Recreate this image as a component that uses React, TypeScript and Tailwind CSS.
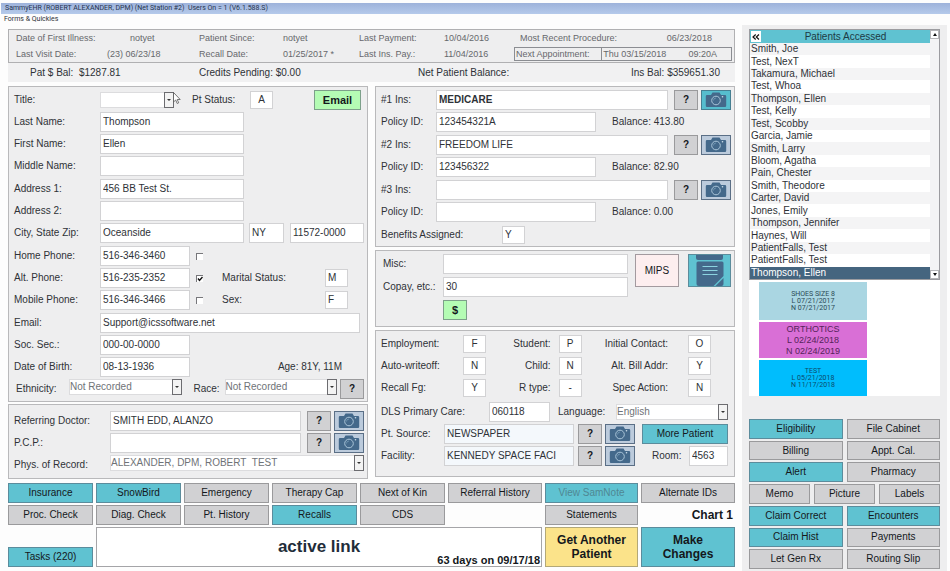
import { useId } from 'react';
import type { ReactNode } from 'react';
import clsx from 'clsx';

const patients = [
  'Smith, Joe',
  'Test, NexT',
  'Takamura, Michael',
  'Test, Whoa',
  'Thompson, Ellen',
  'Test, Kelly',
  'Test, Scobby',
  'Garcia, Jamie',
  'Smith, Larry',
  'Bloom, Agatha',
  'Pain, Chester',
  'Smith, Theodore',
  'Carter, David',
  'Jones, Emily',
  'Thompson, Jennifer',
  'Haynes, Will',
  'PatientFalls, Test',
  'PatientFalls, Test',
  'Thompson, Ellen',
];

const tones = {
  gray: 'bg-[#d1d1d3] border-[#9a9a9c]',
  teal: 'bg-[#5fc2d1] border-[#5b8c9c]',
  green: 'bg-[#b4fcb4] border-[#7da08a]',
  yellow: 'bg-[#fbe38a] border-[#b3a877]',
  pink: 'bg-[#fdeeef] border-[#a39a9f]',
};

type BtnProps = { children: ReactNode; tone?: keyof typeof tones; className?: string; label?: string; disabled?: boolean };

function Btn({ children, tone = 'gray', className, label, disabled }: BtnProps) {
  return (
    <button
      type="button"
      aria-label={label}
      disabled={disabled}
      className={clsx(
        'flex items-center justify-center border text-center',
        disabled ? 'text-[#4f8793]' : 'text-[#14181c]',
        tones[tone],
        className
      )}
    >
      {children}
    </button>
  );
}

function Panel({ children, className }: { children: ReactNode; className?: string }) {
  return <section className={clsx('flex flex-col border border-[#b9b9bb] bg-[#eeeeef] pl-[5px] pr-[3px]', className)}>{children}</section>;
}

function Group({ children }: { children: ReactNode }) {
  return <div className="flex flex-col gap-0.5">{children}</div>;
}

function Row({ children }: { children: ReactNode }) {
  return <div className="flex h-5 items-center">{children}</div>;
}

// label + text box pair, both sized by the caller
type FieldProps = { label: string; value?: string; labelClass?: string; inputClass?: string };

function Field({ label, value = '', labelClass, inputClass }: FieldProps) {
  const id = useId();
  return (
    <>
      <label htmlFor={id} className={clsx('shrink-0 whitespace-nowrap', labelClass)}>
        {label}
      </label>
      <Box id={id} value={value} className={inputClass} />
    </>
  );
}

function Box({ id, value, className, name }: { id?: string; value?: string; className?: string; name?: string }) {
  return (
    <input
      id={id}
      type="text"
      aria-label={name}
      defaultValue={value}
      className={clsx('min-w-0 border border-[#d2d2d4] px-0.5 pb-0.5', className ?? 'h-5 w-36', !className?.includes('bg-') && 'bg-white')}
    />
  );
}

function Select({ label, value, labelClass, className }: { label: string; value: string; labelClass?: string; className?: string }) {
  const id = useId();
  return (
    <>
      <label htmlFor={id} className={clsx('shrink-0 whitespace-nowrap', labelClass)}>
        {label}
      </label>
      <div className={clsx('relative h-4', className)}>
        <select id={id} defaultValue={value} className="block h-4 w-full appearance-none border border-[#dcdcde] bg-white pr-3 leading-[14px] text-[#6f7377]">
          <option>{value}</option>
        </select>
        <span className="pointer-events-none absolute inset-y-0 right-0 flex w-2.5 items-center justify-center border border-[#6c6c70] bg-[#f3f3f3]">
          <svg viewBox="0 0 4 2" className="h-0.5 w-1 fill-[#333]">
            <path d="M0 0h4L2 2z" />
          </svg>
        </span>
      </div>
    </>
  );
}

function PhoneRow({ label, value, checked, children }: { label: string; value: string; checked?: boolean; children?: ReactNode }) {
  return (
    <Row>
      <Field label={label} value={value} labelClass="w-[86px]" inputClass="h-5 w-[90px]" />
      <span className="relative ml-1.5 mr-[19px] h-[7px] w-[7px] shrink-0">
        <input
          type="checkbox"
          aria-label={`${label} preferred`}
          defaultChecked={checked}
          className="peer block h-[7px] w-[7px] appearance-none border-l border-t border-[#77777b] bg-white"
        />
        <svg viewBox="0 0 7 7" className="pointer-events-none absolute inset-0 hidden h-[7px] w-[7px] peer-checked:block">
          <path d="M2 3.5 3.500 5.500 6.500 2" fill="none" stroke="#111" strokeWidth="1.4" />
        </svg>
      </span>
      {children}
    </Row>
  );
}

function Help({ label }: { label: string }) {
  return (
    <Btn label={`Look up ${label}`} className="h-5 w-6 shrink-0 font-bold">
      ?
    </Btn>
  );
}

function Camera({ label, active }: { label: string; active?: boolean }) {
  return (
    <button
      type="button"
      aria-label={`Scan ${label}`}
      className={clsx(
        'ml-[3px] flex h-5 w-[30px] shrink-0 items-center justify-center border',
        active ? 'border-[#467f92] bg-[#56bdce]' : 'border-[#5b6f86] bg-[#bccbdc]'
      )}
    >
      <svg viewBox="0 0 22 16" className="h-4 w-[22px]">
        <path d="M2 3h4l1.5-2.5h7L16 3h4a1.2 1.2 0 0 1 1.2 1.2v9.6A1.2 1.2 0 0 1 20 15H2a1.2 1.2 0 0 1-1.2-1.2V4.2A1.2 1.2 0 0 1 2 3z" fill="#44698b" />
        <circle cx="11" cy="8.5" r="4.3" fill="none" stroke="#a9c4d8" strokeWidth="1" />
        <path d="M8.5 8.5A2.5 2.5 0 0 1 11 6" fill="none" stroke="#7fa3bd" strokeWidth=".7" />
        <circle cx="17.5" cy="4.8" r=".8" fill="#cfe0ec" />
      </svg>
    </button>
  );
}

function Flag({ label, value, labelClass }: { label: string; value: string; labelClass?: string }) {
  return <Field label={label} value={value} labelClass={labelClass} inputClass="h-[18px] w-[23px] text-center" />;
}

function VisitSummary() {
  return (
    <>
      <div className="grid auto-rows-[16px] grid-cols-[91fr_92fr_84fr_76fr_85fr_70fr_218fr] items-center whitespace-nowrap border border-[#b0b0b2] bg-[#eeeeef] pl-[7px] pr-0.5 text-[9px] text-[#66686c]">
        <span>Date of First Illness:</span>
        <span className="pl-[23px]">notyet</span>
        <span>Patient Since:</span>
        <span>notyet</span>
        <span>Last Payment:</span>
        <span>10/04/2016</span>
        <div className="grid grid-cols-[151fr_67fr] pl-1.5">
          <span>Most Recent Procedure:</span>
          <span>06/23/2018</span>
        </div>
        <span>Last Visit Date:</span>
        <span>(23) 06/23/18</span>
        <span>Recall Date:</span>
        <span>01/25/2017 *</span>
        <span>Last Ins. Pay.:</span>
        <span>11/04/2016</span>
        <div className="grid h-3.5 grid-cols-[87fr_131fr] items-center border border-[#8b8d92] leading-3">
          <span className="pl-px">Next Appointment:</span>
          <span className="flex justify-between border-l border-[#8b8d92] pl-px pr-3.5">
            <span>Thu 03/15/2018</span>
            <span>09:20A</span>
          </span>
        </div>
      </div>
      <div className="grid h-[19px] grid-cols-[169fr_219fr_213fr_104fr] items-center whitespace-nowrap bg-[#f1f1f2] pl-[22px]">
        <span>Pat $ Bal:&nbsp; $1287.81</span>
        <span>Credits Pending: $0.00</span>
        <span>Net Patient Balance:</span>
        <span>Ins Bal: $359651.30</span>
      </div>
    </>
  );
}

function Demographics() {
  const label = 'w-[86px]';
  return (
    <Panel className="gap-[3px] pb-0.5 pt-[3px]">
      <Group>
        <div className="relative flex h-5 items-center">
          <Select label="Title:" value="" labelClass={label} className="w-[74px]" />
          <Field label="Pt Status:" value="A" labelClass="ml-[18px] w-[58px]" inputClass="h-[18px] w-[23px] text-center" />
          <Btn tone="green" className="ml-auto mr-[3px] h-5 w-[47px] text-[11px] font-bold">
            Email
          </Btn>
          {/* mouse pointer */}
          <svg viewBox="0 0 8 12" className="absolute left-[159px] top-0.5 h-3 w-2">
            <path d="M.5.5v9.500l2.200-2 1.500 3.500 1.500-.7-1.500-3.300h3z" fill="#fff" stroke="#555" strokeWidth=".8" />
          </svg>
        </div>
        <Row>
          <Field label="Last Name:" value="Thompson" labelClass={label} />
        </Row>
        <Row>
          <Field label="First Name:" value="Ellen" labelClass={label} />
        </Row>
        <Row>
          <Field label="Middle Name:" labelClass={label} />
        </Row>
      </Group>
      <Group>
        <Row>
          <Field label="Address 1:" value="456 BB Test St." labelClass={label} />
        </Row>
        <Row>
          <Field label="Address 2:" labelClass={label} />
        </Row>
        <Row>
          <Field label="City, State Zip:" value="Oceanside" labelClass={label} />
          <Box name="State" value="NY" className="ml-[5px] h-5 w-[35px]" />
          <Box name="Zip" value="11572-0000" className="ml-1.5 h-5 flex-1" />
        </Row>
      </Group>
      <Group>
        <PhoneRow label="Home Phone:" value="516-346-3460" />
        <PhoneRow label="Alt. Phone:" value="516-235-2352" checked>
          <Field label="Marital Status:" value="M" labelClass="w-[103px]" inputClass="h-[18px] w-[23px]" />
        </PhoneRow>
        <PhoneRow label="Mobile Phone:" value="516-346-3466">
          <Field label="Sex:" value="F" labelClass="w-[103px]" inputClass="h-[18px] w-[23px]" />
        </PhoneRow>
      </Group>
      <Group>
        <Row>
          <Field label="Email:" value="Support@icssoftware.net" labelClass={label} inputClass="mr-1 h-5 flex-1" />
        </Row>
        <Row>
          <Field label="Soc. Sec.:" value="000-00-0000" labelClass={label} inputClass="h-5 w-[90px]" />
        </Row>
        <Row>
          <Field label="Date of Birth:" value="08-13-1936" labelClass={label} inputClass="h-5 w-[90px]" />
          <span className="ml-auto pr-[22px]">Age: 81Y, 11M</span>
        </Row>
        <Row>
          <Select label="Ethnicity:" value="Not Recorded" labelClass="w-[55px] pl-0.5" className="flex-1 self-start" />
          <Select label="Race:" value="Not Recorded" labelClass="ml-3 w-[31px]" className="mr-[3px] flex-1 self-start" />
          <Help label="race" />
        </Row>
      </Group>
    </Panel>
  );
}

function Doctors() {
  const label = 'w-24';
  return (
    <Panel className="gap-0.5 pb-[3px] pt-1.5">
      <Row>
        <Field label="Referring Doctor:" value="SMITH EDD, ALANZO" labelClass={label} inputClass="mr-1.5 h-5 flex-1" />
        <Help label="referring doctor" />
        <Camera label="referring doctor" />
      </Row>
      <Row>
        <Field label="P.C.P.:" labelClass={label} inputClass="mr-1.5 h-5 flex-1" />
        <Help label="P.C.P." />
        <Camera label="P.C.P." />
      </Row>
      <Row>
        <Select label="Phys. of Record:" value={'ALEXANDER, DPM, ROBERT\u00a0 TEST'} labelClass={label} className="flex-1 self-start" />
      </Row>
    </Panel>
  );
}

const plans = [
  { name: 'MEDICARE', policy: '123454321A', balance: '413.80' },
  { name: 'FREEDOM LIFE', policy: '123456322', balance: '82.90' },
  { name: '', policy: '', balance: '0.00' },
];

function Insurance() {
  return (
    <Panel className="gap-[3px] pb-px pt-[3px]">
      {plans.map((plan, i) => (
        <Group key={i}>
          <Row>
            <Field
              label={`#${i + 1} Ins:`}
              value={plan.name}
              labelClass="w-[55px]"
              inputClass={clsx('mr-1.5 h-5 flex-1', plan.name && 'border-[#a5cfcb]', i === 0 && 'font-bold')}
            />
            <Help label="insurance" />
            <Camera label="insurance card" active={i === 0} />
          </Row>
          <Row>
            <Field label="Policy ID:" value={plan.policy} labelClass="w-[55px]" inputClass="h-5 w-40" />
            <span className="ml-4">Balance: {plan.balance}</span>
          </Row>
        </Group>
      ))}
      <Row>
        <Field label="Benefits Assigned:" value="Y" labelClass="w-[121px]" inputClass="h-[18px] w-[23px]" />
      </Row>
    </Panel>
  );
}

function Copay() {
  return (
    <Panel className="pb-1.5 pt-[3px]">
      <div className="flex items-start">
        <div className="flex flex-1 flex-col gap-[3px] pl-0.5">
          <Row>
            <Field label="Misc:" labelClass="w-[60px]" inputClass="h-5 flex-1" />
          </Row>
          <Row>
            <Field label="Copay, etc.:" value="30" labelClass="w-[60px]" inputClass="h-5 flex-1" />
          </Row>
          <Btn tone="green" label="Payment" className="ml-[60px] h-5 w-6 text-[11px] font-bold">
            $
          </Btn>
        </div>
        <Btn tone="pink" className="ml-[7px] h-[33px] w-11">
          MIPS
        </Btn>
        <button type="button" aria-label="Notes" className="ml-[9px] h-[33px] w-[43px] border border-[#5b8c9c] bg-[#5fc2d1]">
          <svg viewBox="0 0 41 31" className="h-full w-full">
            <path d="M7 0h27v3a2 2 0 0 1-2 2H9a2 2 0 0 1-2-2z" fill="#44698b" />
            <path d="M9 6.500h24a1.500 1.500 0 0 1 1.500 1.500v13L24.500 31H10a2.500 2.500 0 0 1-2.500-2.500V8A1.500 1.500 0 0 1 9 6.500z" fill="#44698b" />
            <path d="M34.500 23v6a2 2 0 0 1-2 2H26.500z" fill="#44698b" />
            <path d="M13.500 11.500h15M13.500 15.500h15M13.500 19.500h15" stroke="#8cd3e0" strokeWidth="1.200" />
          </svg>
        </button>
      </div>
    </Panel>
  );
}

function MoreInfo() {
  return (
    <Panel className="gap-1 pb-2.5 pt-[3px]">
      <div className="grid auto-rows-[20px] grid-cols-[82px_23px_73fr_23px_107fr_23px] items-center gap-y-0.5 pr-5">
        <Flag label="Employment:" value="F" />
        <Flag label="Student:" value="P" labelClass="pr-2 text-right" />
        <Flag label="Initial Contact:" value="O" labelClass="pr-5 text-right" />
        <Flag label="Auto-writeoff:" value="N" />
        <Flag label="Child:" value="N" labelClass="pr-2 text-right" />
        <Flag label="Alt. Bill Addr:" value="Y" labelClass="pr-5 text-right" />
        <Flag label="Recall Fg:" value="Y" />
        <Flag label="R type:" value="-" labelClass="pr-2 text-right" />
        <Flag label="Spec Action:" value="N" labelClass="pr-5 text-right" />
      </div>
      <div className="flex flex-col gap-0.5 pr-[3px]">
        <Row>
          <Field label="DLS Primary Care:" value="060118" labelClass="w-[108px]" inputClass="h-5 w-[61px]" />
          <Select label="Language:" value="English" labelClass="ml-2 w-[58px]" className="flex-1" />
        </Row>
        <Row>
          <Field label="Pt. Source:" value="NEWSPAPER" labelClass="w-[63px]" inputClass="mr-1 h-5 flex-1 bg-[#f4f8fc]" />
          <Help label="patient source" />
          <Camera label="patient source" />
          <Btn tone="teal" className="ml-[7px] h-5 w-[86px]">
            More Patient
          </Btn>
        </Row>
        <Row>
          <Field label="Facility:" value="KENNEDY SPACE FACI" labelClass="w-[63px]" inputClass="mr-1 h-5 flex-1 bg-[#f4f8fc]" />
          <Help label="facility" />
          <Camera label="facility" />
          <Field label="Room:" value="4563" labelClass="ml-[17px] w-[37px]" inputClass="h-5 w-[39px]" />
        </Row>
      </div>
    </Panel>
  );
}

function Actions() {
  return (
    <div className="mt-1 grid grid-cols-[85fr_85fr_85fr_85fr_85fr_94fr_93fr_94fr] grid-rows-[20px_20px_40px] gap-x-[3px] gap-y-0.5 whitespace-nowrap">
      <Btn tone="teal">Insurance</Btn>
      <Btn tone="teal">SnowBird</Btn>
      <Btn>Emergency</Btn>
      <Btn>Therapy Cap</Btn>
      <Btn>Next of Kin</Btn>
      <Btn>Referral History</Btn>
      <Btn tone="teal" disabled>
        View SamNote
      </Btn>
      <Btn>Alternate IDs</Btn>
      <Btn>Proc. Check</Btn>
      <Btn>Diag. Check</Btn>
      <Btn>Pt. History</Btn>
      <Btn tone="teal">Recalls</Btn>
      <Btn>CDS</Btn>
      <Btn className="col-start-7">Statements</Btn>
      <span className="self-center pr-0.5 text-right text-[12px] font-bold text-[#14181c]">Chart 1</span>
      <Btn tone="teal" className="h-5 self-end">
        Tasks (220)
      </Btn>
      <div className="col-span-5 grid border border-[#a5a5a8] bg-white font-bold">
        <span className="self-center text-center text-[17px] text-[#1f2d3a] [grid-area:1/1]">active link</span>
        <span className="self-end justify-self-end pr-px text-[11px] leading-3 text-[#14181c] [grid-area:1/1]">63 days on 09/17/18</span>
      </div>
      <Btn tone="yellow" className="whitespace-normal text-[12px] font-bold leading-[14px]">
        Get Another Patient
      </Btn>
      <Btn tone="teal" className="whitespace-normal px-4 text-[12px] font-bold leading-[14px]">
        Make Changes
      </Btn>
    </div>
  );
}

function PatientList() {
  return (
    <div className="flex border border-[#9c9ca0] bg-white">
      <div className="min-w-0 flex-1">
        <div className="flex h-[13px] items-center bg-[#5fc2d1] pl-px text-[#1d3a44]">
          <button type="button" aria-label="Collapse list" className="flex h-[11px] w-2.5 items-center justify-center bg-white">
            <svg viewBox="0 0 8 6" className="h-1.5 w-2">
              <path d="M3.700.5 1 3l2.700 2.500M7 .5 4.300 3 7 5.500" fill="none" stroke="#111" strokeWidth="1.200" />
            </svg>
          </button>
          <h2 className="flex-1 text-center leading-3">Patients Accessed</h2>
        </div>
        <ul className="grid h-[236px] auto-rows-fr">
          {patients.map((name, i) => (
            <li key={i} className="flex">
              <button
                type="button"
                className={clsx(
                  'w-full whitespace-nowrap pl-px text-left leading-3',
                  i === patients.length - 1 ? 'bg-[#45657f] text-white' : i % 2 ? 'bg-white' : 'bg-[#f4f4f5]'
                )}
              >
                {name}
              </button>
            </li>
          ))}
        </ul>
      </div>
      <div className="flex w-[9px] flex-col justify-between bg-[#f4f4f5]">
        <button type="button" aria-label="Scroll up" className="flex h-[9px] items-center justify-center border border-[#b5b5b8] bg-white">
          <svg viewBox="0 0 4 3" className="h-[3px] w-1">
            <path d="M0 3h4L2 0z" fill="#111" />
          </svg>
        </button>
        <button type="button" aria-label="Scroll down" className="flex h-[9px] items-center justify-center border border-[#b5b5b8] bg-white">
          <svg viewBox="0 0 4 3" className="h-[3px] w-1">
            <path d="M0 0h4L2 3z" fill="#111" />
          </svg>
        </button>
      </div>
    </div>
  );
}

function Sidebar() {
  return (
    <aside className="mr-[3px] w-[205px] shrink-0 bg-[#eeeeef] px-[7px] pb-0.5 pt-1">
      <PatientList />
      <div className="flex flex-col gap-0.5 bg-white pl-2.5 pt-0.5 text-center font-['Roboto',sans-serif]">
        <div className="flex h-[38px] w-[108px] flex-col justify-center bg-[#aad6e2] text-[7px] leading-[7px] text-[#2b4a56]">
          <p>SHOES SIZE 8</p>
          <p>L 07/21/2017</p>
          <p>N 07/21/2017</p>
        </div>
        <div className="flex h-9 w-[108px] flex-col justify-center bg-[#d96fd6] font-['Liberation_Sans',Arial,sans-serif] text-[9px] leading-[11px] text-[#55245a]">
          <p>ORTHOTICS</p>
          <p>L 02/24/2018</p>
          <p>N 02/24/2019</p>
        </div>
        <div className="flex h-9 w-[108px] flex-col justify-center bg-[#00bdfd] text-[7px] leading-[7px] text-[#0b4a6b]">
          <p>TEST</p>
          <p>L 05/21/2018</p>
          <p>N 11/17/2018</p>
        </div>
      </div>
      <div className="mt-[23px] grid h-[150px] auto-rows-fr grid-cols-6 gap-x-1 gap-y-0.5">
        <Btn tone="teal" className="col-span-3">Eligibility</Btn>
        <Btn className="col-span-3">File Cabinet</Btn>
        <Btn className="col-span-3">Billing</Btn>
        <Btn className="col-span-3">Appt. Cal.</Btn>
        <Btn tone="teal" className="col-span-3">Alert</Btn>
        <Btn className="col-span-3">Pharmacy</Btn>
        <Btn className="col-span-2">Memo</Btn>
        <Btn className="col-span-2">Picture</Btn>
        <Btn className="col-span-2">Labels</Btn>
        <Btn tone="teal" className="col-span-3">Claim Correct</Btn>
        <Btn tone="teal" className="col-span-3">Encounters</Btn>
        <Btn tone="teal" className="col-span-3">Claim Hist</Btn>
        <Btn className="col-span-3">Payments</Btn>
        <Btn className="col-span-3">Let Gen Rx</Btn>
        <Btn className="col-span-3">Routing Slip</Btn>
      </div>
    </aside>
  );
}

export default function App() {
  return (
    <div className="min-h-screen bg-[#fdfdfd] pt-[3px] font-['Liberation_Sans',Arial,sans-serif] text-[10px] leading-4 text-[#2e3237]">
      <header className="font-['Roboto','Noto_Sans',sans-serif] text-[7px] leading-[11px]">
        <h1 className="ml-px h-[11px] whitespace-pre bg-gradient-to-b from-[#9db2da] to-[#b5caeb] pl-1 text-[#26344f]">
          SammyEHR (ROBERT ALEXANDER, DPM) (Net Station #2)  Users On = 1 (V6.1.588.S)
        </h1>
        <nav className="h-[11px] pl-1">
          <button type="button" className="block">
            Forms &amp; Quickies
          </button>
        </nav>
      </header>
      <div className="flex items-start gap-[7px]">
        <main className="min-w-0 flex-1 pl-2 pt-1">
          <VisitSummary />
          <div className="mt-1 grid grid-cols-2 items-start gap-[7px]">
            <div className="flex flex-col gap-0.5">
              <Demographics />
              <Doctors />
            </div>
            <div className="flex flex-col gap-[3px]">
              <Insurance />
              <Copay />
              <MoreInfo />
            </div>
          </div>
          <Actions />
        </main>
        <Sidebar />
      </div>
    </div>
  );
}
